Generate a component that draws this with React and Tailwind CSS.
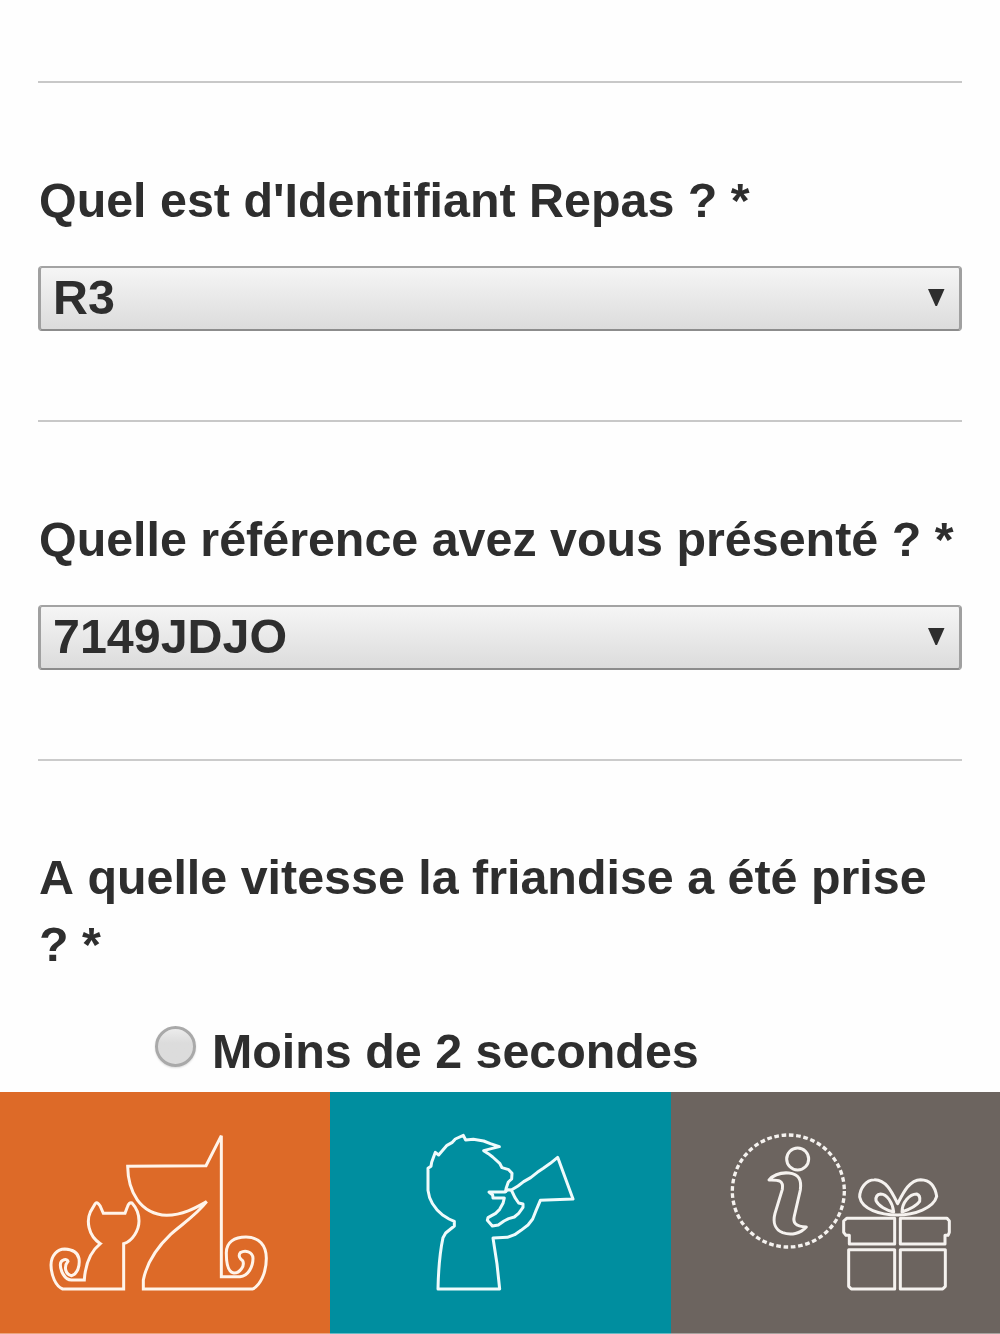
import clsx from 'clsx'

const questions = [
  { id: 'repas', label: "Quel est d'Identifiant Repas ? *", value: 'R3' },
  { id: 'reference', label: 'Quelle référence avez vous présenté ? *', value: '7149JDJO' },
]

export default function App() {
  return (
    <div className="flex h-[1334px] w-[1000px] flex-col overflow-hidden bg-[#fefefe] font-['Liberation_Sans',Arial,sans-serif] text-[48.4px] leading-[67px] font-bold text-[#2e2e2e] [font-kerning:none]">
      <main className="min-h-0 flex-1 overflow-hidden px-[38px] pt-[81px]">
        <form>
          {questions.map((q) => (
            <Question key={q.id} label={q.label} value={q.value} />
          ))}
          <fieldset className="border-t-2 border-[#cbcbcb] pt-[83px]">
            <p className="pl-px">A quelle vitesse la friandise a été prise ? *</p>
            <label className="mt-[40px] flex pl-[117px]">
              <span className="mt-[8px] mr-[16px] size-[41px] rounded-full border-[3px] border-[#a9a9a9] bg-linear-to-b from-[#ececec] to-[#dcdcdc] to-40% shadow-[0_1px_2px_#ddd]" />
              Moins de 2 secondes
            </label>
          </fieldset>
        </form>
      </main>
      <nav className="flex h-[242px] shrink-0">
        <Tab className="w-[330px] bg-[#dd6a28]"><PetsIcon /></Tab>
        <Tab className="w-[341px] bg-[#008e9f]"><SpeakerIcon /></Tab>
        <Tab className="w-[329px] bg-[#6c645f]"><GiftIcon /></Tab>
      </nav>
    </div>
  )
}

function Question({ label, value }) {
  return (
    <div className="h-[339px] border-t-2 border-[#c8c8c8] pt-[84px]">
      <p className="pl-px whitespace-nowrap">{label}</p>
      <button
        type="button"
        className="mt-[32px] flex h-[65px] w-full items-center justify-between rounded-[4px] border-[3px] border-t-2 border-t-[#a3a3a3] border-r-[#a0a0a0] border-b-2 border-b-[#8c8c8c] border-l-[#a0a0a0] bg-linear-to-b from-[#f5f5f5] to-[#dcdcdc] pr-[14px] pl-[12px]"
      >
        <span className="pb-[2px] leading-[59px]">{value}</span>
        <svg className="mb-[4px] h-[18px] w-[18px]" viewBox="0 0 18 18" fill="#2e2e2e">
          <path d="M1 1H17.500L10 18H8.500Z" />
        </svg>
      </button>
    </div>
  )
}

function Tab({ className, children }) {
  return <a className={clsx('flex justify-center border-b border-white/40', className)}>{children}</a>
}

// Cat and dog outlines
function PetsIcon() {
  return (
    <svg className="mt-[28px] mr-[20px] h-[190px] w-[250px]" viewBox="0 0 750 570" fill="none" stroke="#fff4ea" strokeWidth="9">
      <path d="M340 507V480C350 430 383 380 422 343C457 312 500 284 530 245C495 265 458 285 410 286C330 282 294 215 293 139L528 137L574 47V470H630C655 468 669 440 669 415C668 394 645 390 631 398C624 407 629 416 638 422C645 437 631 459 612 459C593 457 589 425 589 400C588 366 614 351 648 351C687 351 709 376 709 415C709 460 690 496 668 507Z" />
      <path d="M281 507V371C308 363 327 330 327 303C327 278 317 261 306 249Q297 246 292 261L285 280H220L211 259Q201 242 195 252L181 276C170 300 172 345 211 371C181 395 166 432 163 480H124C103 480 91 450 91 435C91 417 114 415 114 424C101 439 105 463 125 467C143 461 150 438 147 416C143 396 124 388 104 387C82 387 63 407 63 435C64 466 76 498 98 507Z" />
    </svg>
  )
}

// Child with a megaphone
function SpeakerIcon() {
  return (
    <svg className="mt-[28px] mr-[2px] h-[190px] w-[180px]" viewBox="0 0 540 570" fill="none" stroke="#effbfc" strokeWidth="9" strokeLinejoin="round">
      <path d="M84 507C85 455 89 400 99 353L107 339L133 318V304L117 297L99 286C70 263 57 239 54 211V145L63 139L65 127L76 97L86 105L111 76L127 67L136 57L160 46L167 60L190 58L221 63L241 71L268 80L244 86L221 92L235 101L248 111L269 130L276 143L296 149L306 160L305 177L295 186L289 203L286 216H237L248 225L249 234H283L279 250L269 268L257 280L234 293L232 301L247 318L265 315L282 303L296 296L313 291L326 280L339 262V252L326 249L315 233L304 210L324 198L341 185L362 173L382 157L400 145L421 130L443 112L489 237L391 241L378 272L368 297L354 315L333 331L314 344L292 352L249 354L261 432L269 507Z" />
      <path d="M286 216L293 209L304 210" />
    </svg>
  )
}

// Info badge next to a wrapped present
function GiftIcon() {
  return (
    <svg className="mt-[28px] mr-[-9px] h-[190px] w-[240px]" viewBox="0 0 720 570" fill="none" stroke="#f5f2ef" strokeWidth="9" strokeLinejoin="round">
      <circle cx="205" cy="213" r="168" strokeDasharray="14 8" strokeWidth="10" />
      <circle cx="233" cy="117" r="33" />
      <path d="M147 180C163 162 183 157 207 159C238 162 245 181 241 210L223 288C218 308 225 319 259 321C241 341 213 347 188 338C165 329 158 307 165 280L187 208C191 182 178 179 147 180Z" />
      <g>
        <path d="M533 251C517 219 499 178 463 179C438 179 419 206 419 231C426 268 480 285 532 285C584 285 641 264 650 229C646 202 632 180 602 179C567 180 549 220 533 251Z" />
        <path d="M521 276C518 248 501 222 482 222Q466 224 468 242C475 258 500 272 521 276ZM546 276C546 248 568 222 590 222Q602 226 599 244C588 260 568 268 546 276Z" />
        <path d="M380 295H524V372H388V346H378L371 337V303ZM541 295H681L688 303V337L684 346H675V372H541Z" />
        <path d="M386 389H524V507H394L386 499ZM541 389H676V499L668 507H541Z" />
      </g>
    </svg>
  )
}
